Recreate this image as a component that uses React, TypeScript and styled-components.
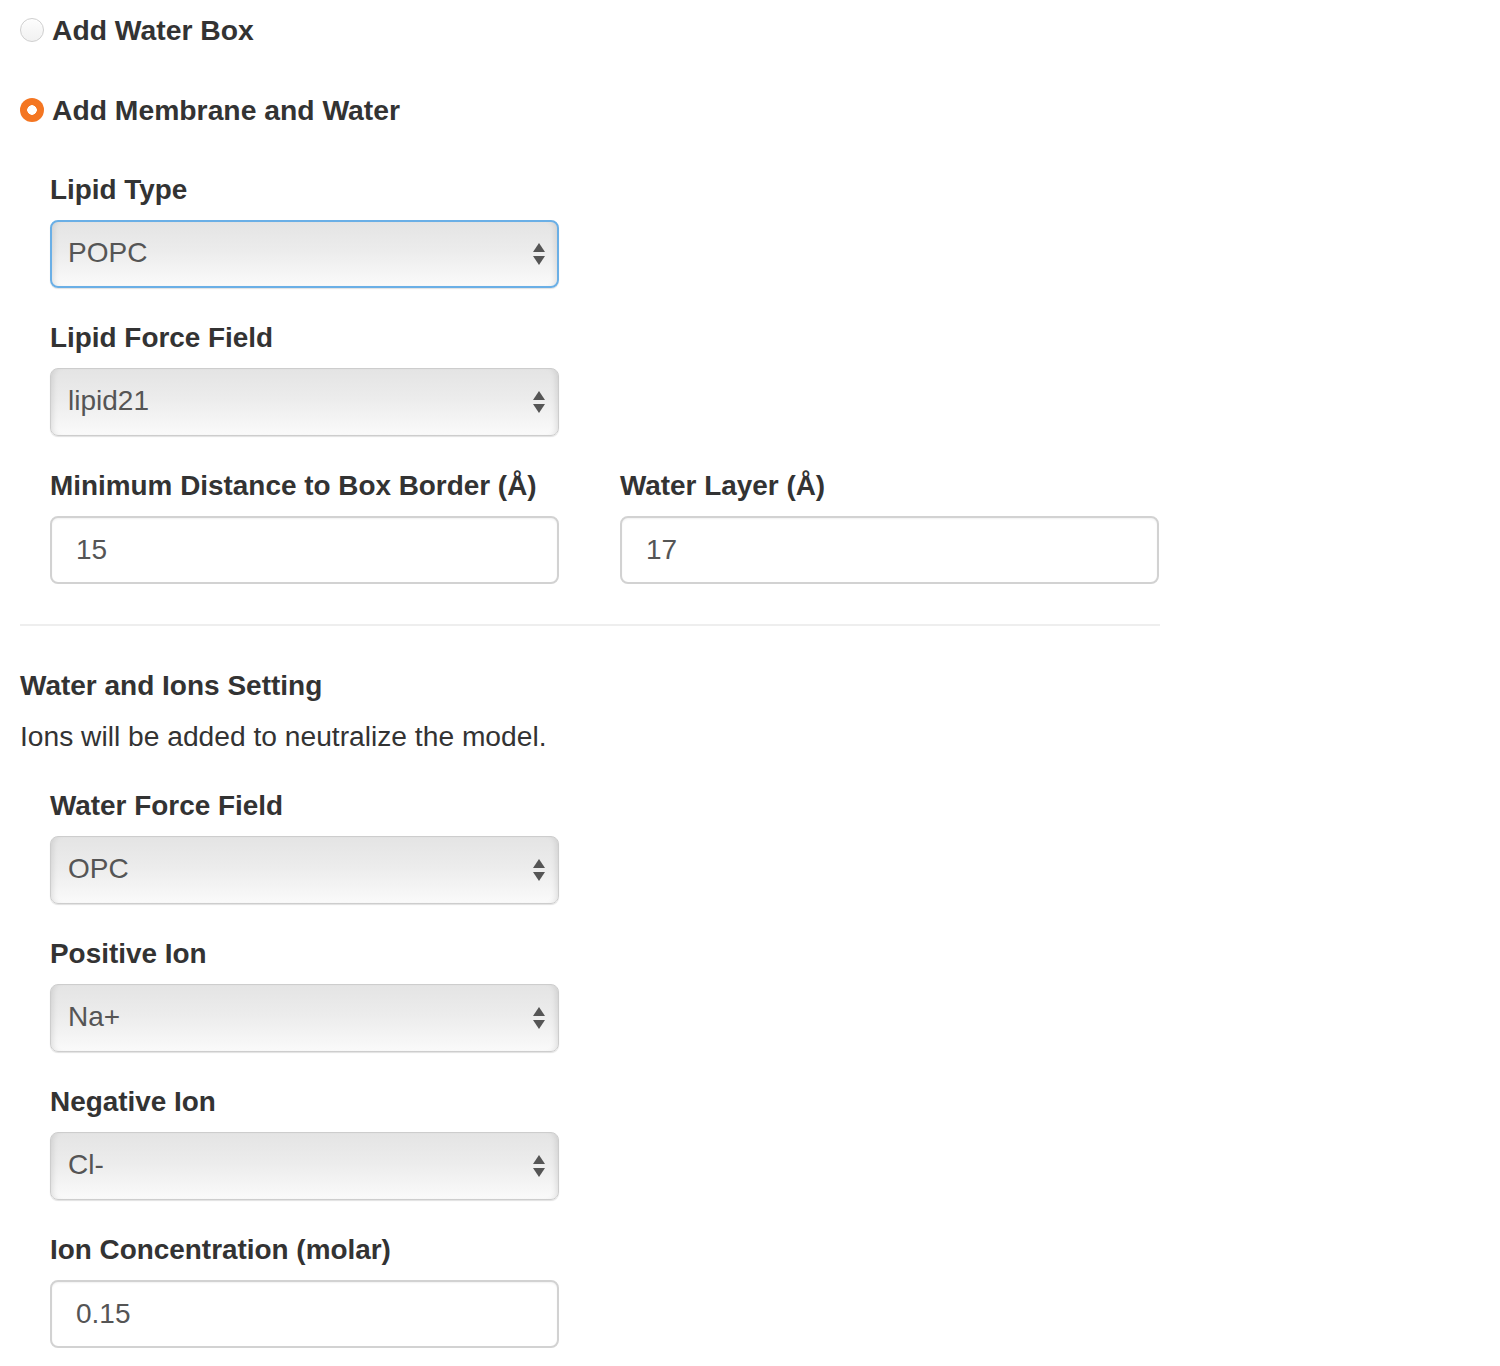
import React from "react";
import styled, { createGlobalStyle } from "styled-components";

const GlobalStyle = createGlobalStyle`
    html, body {
        margin: 0;
        padding: 0;
        background: #fff;
    }
    body {
        font-family: "Liberation Sans", Arial, Helvetica, sans-serif;
        font-size: 28px;
        line-height: 40px;
        color: #333;
    }
    * {
        box-sizing: border-box;
    }
`;

const Page = styled.div`
    padding: 10px 0 0 20px;
    width: 1160px;
`;

const RadioRow = styled.label`
    display: flex;
    align-items: center;
    gap: 8px;
    height: 40px;
    margin-bottom: 40px;
    font-weight: bold;
    font-size: 28.3px;
    cursor: pointer;
`;

const RadioDot = styled.span<{ $checked?: boolean }>`
    width: 24px;
    height: 24px;
    border-radius: 50%;
    flex: none;
    ${(p) =>
        p.$checked
            ? `
        background: radial-gradient(circle, #fff 0 4.5px, #f47622 5px);
    `
            : `
        background: linear-gradient(#fdfdfd, #f1f1f1);
        border: 1px solid #cfcfcf;
        box-shadow: inset 0 1px 1px rgba(255,255,255,0.8);
    `}
`;

const Indent = styled.div`
    padding-left: 30px;
`;

const FieldGrid = styled.div`
    display: grid;
    grid-template-columns: 509px 539px;
    column-gap: 61px;
`;

const FormGroup = styled.div`
    margin-bottom: 30px;
`;

const Label = styled.div`
    font-weight: bold;
    font-size: 27.9px;
    height: 40px;
    margin-bottom: 10px;
    white-space: nowrap;
`;

const SelectWrap = styled.div`
    position: relative;
    width: 509px;
`;

const Select = styled.select<{ $focused?: boolean }>`
    appearance: none;
    -webkit-appearance: none;
    width: 100%;
    height: 68px;
    padding: 0 40px 3px ${(p) => (p.$focused ? "16px" : "17px")};
    font-family: "Liberation Sans", Arial, Helvetica, sans-serif;
    font-size: 28px;
    color: #555;
    border-radius: 8px;
    border: ${(p) => (p.$focused ? "2px solid #6aafe6" : "1px solid #cdcdcd")};
    background: linear-gradient(#e4e4e4, #ececec 45%, #fafafa 100%);
    box-shadow: inset 6px 0 6px -5px rgba(0, 0, 0, 0.12),
        inset -6px 0 6px -5px rgba(0, 0, 0, 0.12),
        0 1px 1px rgba(0, 0, 0, 0.12);
    outline: none;
`;

const Arrows = styled.span`
    position: absolute;
    right: 13px;
    top: 50%;
    transform: translateY(-50%);
    display: flex;
    pointer-events: none;
`;

const TextInput = styled.input<{ $wide?: boolean }>`
    width: ${(p) => (p.$wide ? "539px" : "509px")};
    height: 68px;
    padding: 0 24px;
    font-family: "Liberation Sans", Arial, Helvetica, sans-serif;
    font-size: 28px;
    color: #555;
    border: 2px solid #d2d2d2;
    border-radius: 8px;
    background: #fff;
    box-shadow: inset 0 1px 2px rgba(0, 0, 0, 0.06);
    outline: none;
`;

const Divider = styled.hr`
    border: none;
    border-top: 2px solid #eee;
    margin: 10px 0 40px;
`;

const SectionTitle = styled.div`
    font-weight: bold;
    font-size: 28px;
    height: 40px;
    margin-bottom: 10px;
`;

const Note = styled.p`
    margin: 0 0 30px;
    font-size: 28.2px;
`;

function UpDown() {
    return (
        <Arrows>
            <svg width="14" height="24" viewBox="0 0 14 24">
                <polygon points="7,1 13,10 1,10" fill="#555" />
                <polygon points="1,14 13,14 7,23" fill="#555" />
            </svg>
        </Arrows>
    );
}

function SelectField({
    label,
    value,
    focused,
}: {
    label: string;
    value: string;
    focused?: boolean;
}) {
    return (
        <FormGroup>
            <Label>{label}</Label>
            <SelectWrap>
                <Select $focused={focused} defaultValue={value}>
                    <option value={value}>{value}</option>
                </Select>
                <UpDown />
            </SelectWrap>
        </FormGroup>
    );
}

export default function App() {
    return (
        <>
            <GlobalStyle />
            <Page>
                <RadioRow>
                    <RadioDot />
                    Add Water Box
                </RadioRow>
                <RadioRow>
                    <RadioDot $checked />
                    Add Membrane and Water
                </RadioRow>

                <Indent>
                    <SelectField label="Lipid Type" value="POPC" focused />
                    <SelectField label="Lipid Force Field" value="lipid21" />
                    <FieldGrid>
                        <FormGroup>
                            <Label>Minimum Distance to Box Border (Å)</Label>
                            <TextInput defaultValue="15" />
                        </FormGroup>
                        <FormGroup>
                            <Label>Water Layer (Å)</Label>
                            <TextInput $wide defaultValue="17" />
                        </FormGroup>
                    </FieldGrid>
                </Indent>

                <Divider />

                <SectionTitle>Water and Ions Setting</SectionTitle>
                <Note>Ions will be added to neutralize the model.</Note>

                <Indent>
                    <SelectField label="Water Force Field" value="OPC" />
                    <SelectField label="Positive Ion" value="Na+" />
                    <SelectField label="Negative Ion" value="Cl-" />
                    <FormGroup>
                        <Label>Ion Concentration (molar)</Label>
                        <TextInput defaultValue="0.15" />
                    </FormGroup>
                </Indent>
            </Page>
        </>
    );
}
